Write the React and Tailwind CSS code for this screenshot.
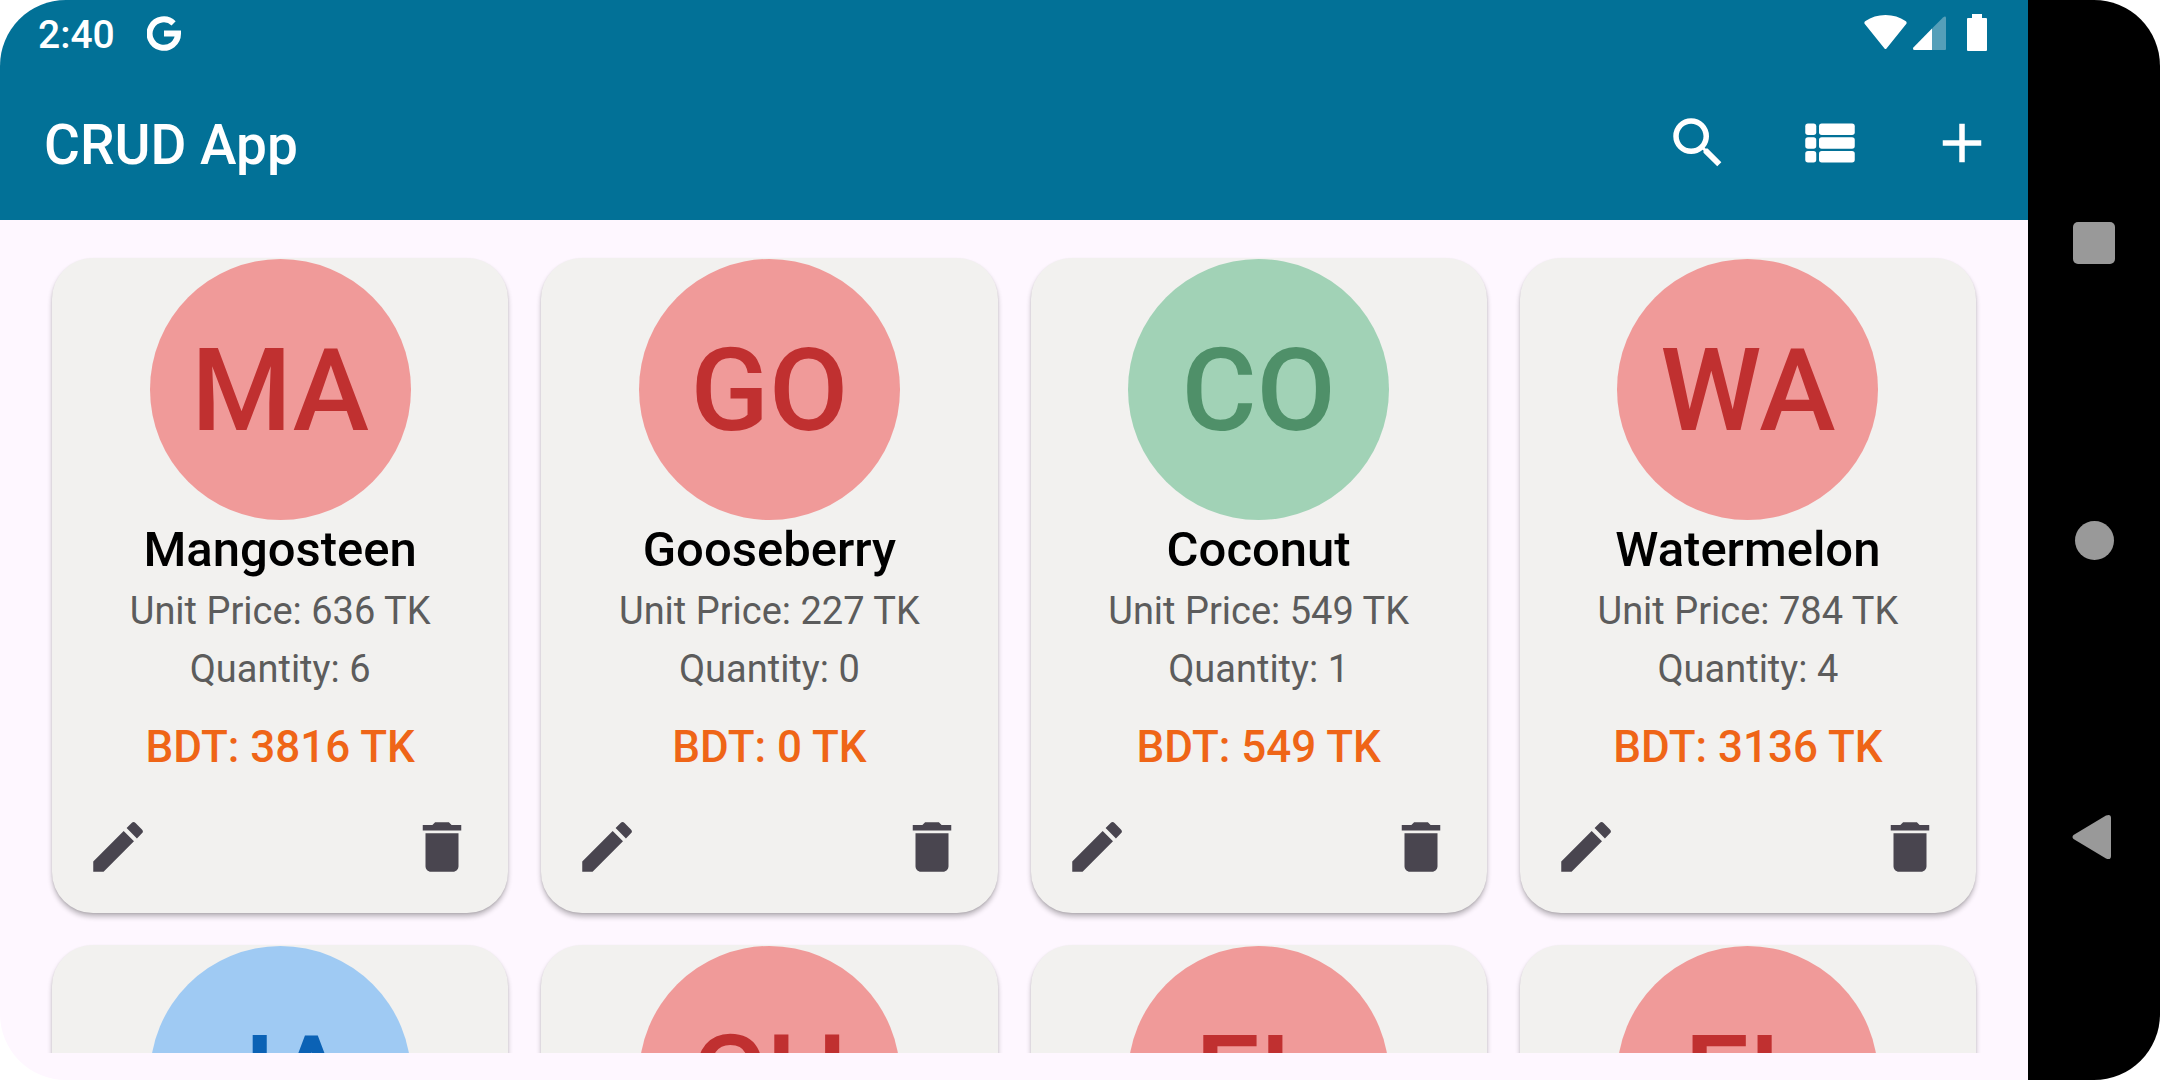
import { MdEdit, MdDelete, MdSearch, MdAdd } from 'react-icons/md';

const products = [
  { id: 1, name: 'Mangosteen', initials: 'MA', price: 636, quantity: 6, tone: 'red' },
  { id: 2, name: 'Gooseberry', initials: 'GO', price: 227, quantity: 0, tone: 'red' },
  { id: 3, name: 'Coconut', initials: 'CO', price: 549, quantity: 1, tone: 'green' },
  { id: 4, name: 'Watermelon', initials: 'WA', price: 784, quantity: 4, tone: 'red' },
  { id: 5, initials: 'JA', tone: 'blue' },
  { id: 6, initials: 'CH', tone: 'red' },
  { id: 7, initials: 'EL', tone: 'red' },
  { id: 8, initials: 'EL', tone: 'red' },
];

const tones = {
  red: 'bg-[#f09a99] text-[#c03030]',
  green: 'bg-[#a1d2b6] text-[#4f9069]',
  blue: 'bg-[#9fcaf3] text-[#0b62b5]',
};

function GoogleIcon() {
  return (
    <svg viewBox="0 0 34 35" className="h-[35px] w-[34px]" fill="none" stroke="currentColor" strokeWidth="6" aria-label="Google">
      <path d="M26.600 7.300A14.200 14.200 0 1 0 31 17.500H17" />
    </svg>
  );
}

function StatusBar() {
  return (
    <div className="flex h-[66px] items-center justify-between pr-10 pl-[38px]">
      <div className="flex items-center gap-8">
        <span className="pt-[3px] text-[39px] leading-[46px] font-medium">2:40</span>
        <GoogleIcon />
      </div>
      <svg viewBox="0 0 124 38" className="h-[38px] w-[124px]" fill="currentColor" aria-label="Wi-Fi, mobile signal and battery">
        <path d="M0.6 9.8Q-.2 8 1.5 7Q10 1 21.500 1T41.500 7Q43.200 8 42.400 9.800L22.500 34.400Q21.500 35.400 20.500 34.400Z" />
        <path d="M79 3.400Q81.900 1.500 82 4V35Q82 36 81 36H68V14.500Z" opacity=".33" />
        <path d="M68 14.500V36H50.500Q48.200 35.500 49.400 33.500Z" />
        <path d="M108 0h10v4h4q1 0 1 1v31q0 1-1 1h-18q-1 0-1-1V5q0-1 1-1h4Z" />
      </svg>
    </div>
  );
}

function ListIcon() {
  return (
    <svg viewBox="0 0 66 66" className="size-[66px]" fill="currentColor" aria-hidden="true">
      {[13.5, 27.25, 41].map((y) => (
        <g key={y}>
          <rect x="8.25" y={y} width="11" height="11.5" rx="2.75" />
          <rect x="22" y={y} width="35.75" height="11.5" rx="2.75" />
        </g>
      ))}
    </svg>
  );
}

function BarButton({ label, children }) {
  return (
    <button type="button" aria-label={label} className="flex size-[132px] items-center justify-center">
      {children}
    </button>
  );
}

function ProductDetails({ product }) {
  const { name, price, quantity } = product;
  return (
    <>
      <h2 className="text-[49px] leading-[60px] font-medium text-black">{name}</h2>
      <p className="mt-0.5 text-[38px] leading-[58px] text-[#5c5c5c]">Unit Price: {price} TK</p>
      <p className="text-[38px] leading-[58px] text-[#5c5c5c]">Quantity: {quantity}</p>
      <p className="mt-4 text-[44px] leading-[66px] font-medium text-[#ef6517]">BDT: {price * quantity} TK</p>
      <div className="mt-[34px] mb-[33px] flex justify-between self-stretch px-[33px] text-[#49454f]">
        <button type="button" aria-label={`Edit ${name}`}><MdEdit className="size-[66px]" /></button>
        <button type="button" aria-label={`Delete ${name}`}><MdDelete className="size-[66px]" /></button>
      </div>
    </>
  );
}

function ProductCard({ product }) {
  const { name, initials, tone } = product;
  return (
    <article className="flex min-h-[655px] flex-col items-center rounded-[41px] bg-[#f2f1ef] shadow-[0_4px_5px_rgba(0,0,0,0.24),0_1px_2px_rgba(0,0,0,0.1)]">
      <div className={`mt-px flex size-[261px] items-center justify-center rounded-full pt-0.5 text-[115px] leading-[136px] font-medium ${tones[tone]}`}>
        {initials}
      </div>
      {name && <ProductDetails product={product} />}
    </article>
  );
}

function NavButton({ label, children }) {
  return (
    <button type="button" aria-label={label} className="flex size-[132px] items-center justify-center">
      {children}
    </button>
  );
}

function SystemNav() {
  return (
    <nav aria-label="System" className="flex w-[132px] shrink-0 flex-col items-center justify-center gap-[165px] bg-black text-[#999999]">
      <NavButton label="Recent apps">
        <span className="size-[42px] rounded-[5px] bg-current" />
      </NavButton>
      <NavButton label="Home">
        <span className="size-[39px] rounded-full bg-current" />
      </NavButton>
      <NavButton label="Back">
        <svg viewBox="0 0 44 46" className="h-[46px] w-11" fill="currentColor" aria-hidden="true">
          <path d="M1.500 21L34 1.500Q39 -.5 39 4V42Q39 46.500 34 44.500L1.500 25Q-.5 23 1.500 21Z" />
        </svg>
      </NavButton>
    </nav>
  );
}

export default function App() {
  return (
    <div className="h-screen bg-white font-[Roboto,sans-serif]">
      <div className="flex h-full overflow-hidden rounded-[66px]">
        <div className="flex min-w-0 flex-1 flex-col bg-[#fef7ff]">
          <header className="shrink-0 bg-[#027197] text-white">
            <StatusBar />
            <div className="flex h-[154px] items-center justify-between pl-11">
              <h1 className="pt-[3px] text-[55px] leading-[66px] font-medium">CRUD App</h1>
              <div className="flex">
                <BarButton label="Search"><MdSearch className="size-[66px]" /></BarButton>
                <BarButton label="List view"><ListIcon /></BarButton>
                <BarButton label="Add product"><MdAdd className="size-[66px]" /></BarButton>
              </div>
            </div>
          </header>
          <main className="mb-[27px] grid min-h-0 flex-1 grid-cols-4 content-start gap-x-[33px] gap-y-8 overflow-hidden px-[52px] pt-[38px]">
            {products.map((product) => (
              <ProductCard key={product.id} product={product} />
            ))}
          </main>
        </div>
        <SystemNav />
      </div>
    </div>
  );
}
